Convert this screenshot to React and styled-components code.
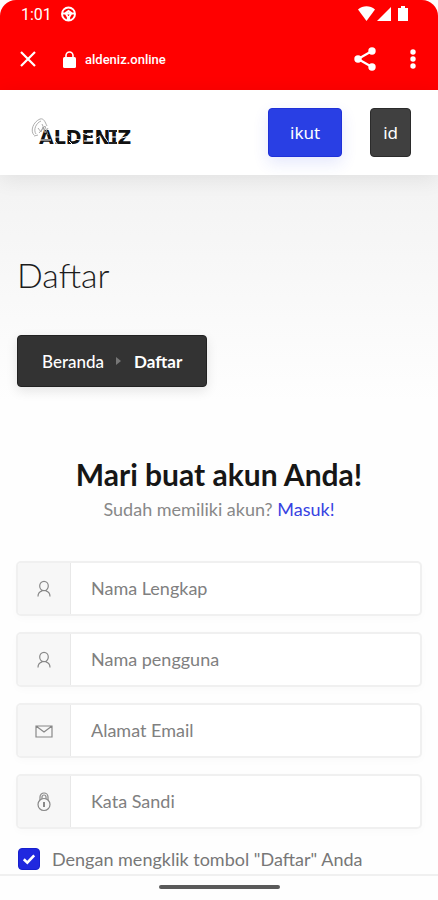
import React from "react";
import styled, { createGlobalStyle } from "styled-components";

const GlobalStyle = createGlobalStyle`
  *, *::before, *::after { box-sizing: border-box; }
  body { margin: 0; background: #fff; }
  button, input { font: inherit; }
`;

const Screen = styled.div`
  display: flex;
  flex-direction: column;
  min-height: 100vh;
  background: #fefefe;
  color: #1c1c1c;
  font-family: Lato, "Noto Sans", sans-serif;
  font-size: 18px;
`;

const BrowserChrome = styled.div`
  background: #ff0000;
  color: #fff;
  border-radius: 16px 16px 0 0;
  font-family: Roboto, sans-serif;
`;

const StatusBar = styled.div`
  display: flex;
  align-items: center;
  height: 28px;
  padding: 0 28px 0 21px;
  gap: 8px;
  font-size: 16px;
`;

const StatusIcons = styled.div`
  display: flex;
  align-items: center;
  margin-left: auto;
`;

const AddressBar = styled.div`
  display: flex;
  align-items: center;
  height: 62px;
  padding: 0 1px 0 16px;
`;

const IconButton = styled.button`
  display: flex;
  align-items: center;
  justify-content: center;
  width: ${(p) => p.$width}px;
  height: 40px;
  padding: 0;
  border: 0;
  background: none;
  color: inherit;
`;

const Address = styled.div`
  display: flex;
  align-items: center;
  flex: 1;
  gap: 9px;
  padding-left: 24px;
  font-size: 13px;
  font-weight: 500;
`;

const Header = styled.header`
  display: flex;
  align-items: center;
  height: 85px;
  padding: 0 27px 0 30px;
  gap: 28px;
  background: #fff;
  box-shadow: 0 4px 20px rgba(0, 0, 0, 0.08);
  z-index: 1;
`;

const Logo = styled.a`
  display: flex;
  margin-right: auto;
  color: #111;
  text-decoration: none;
`;

const HeaderButton = styled.button`
  height: 49px;
  padding: 0 ${(p) => (p.$primary ? 21 : 12)}px;
  border: ${(p) => (p.$primary ? "1px solid #1f31d8" : "1px solid #2b2b2b")};
  border-radius: 4px;
  background: ${(p) => (p.$primary ? "#293fe4" : "#404040")};
  color: #fff;
  font-family: "Noto Sans", sans-serif;
  font-size: 17px;
  line-height: 24px;
  box-shadow: ${(p) => (p.$primary ? "0 6px 16px rgba(41, 63, 228, 0.12)" : "none")};
`;

const Hero = styled.section`
  display: flex;
  flex-direction: column;
  align-items: flex-start;
  gap: 38px;
  padding: 78px 17px 40px;
  background: linear-gradient(#f3f3f3, #fefefe 90%);
`;

const PageTitle = styled.h1`
  margin: 0;
  font-size: 34px;
  font-weight: 300;
  line-height: 44px;
`;

const Breadcrumb = styled.nav`
  display: flex;
  align-items: center;
  height: 52px;
  padding: 0 24px;
  gap: 12px;
  border: 1px solid #222;
  border-radius: 4px;
  background: #333;
  color: #fff;
  font-size: 17px;
  box-shadow: 0 4px 12px rgba(0, 0, 0, 0.1);
`;

const Crumb = styled.a`
  color: inherit;
  text-decoration: none;
  font-weight: 500;
`;

const CurrentCrumb = styled.span`
  font-weight: 700;
`;

const Signup = styled.main`
  display: flex;
  flex-direction: column;
  flex: 1;
  padding: 27px 16px 0;
`;

const SignupTitle = styled.h2`
  margin: 0;
  text-align: center;
  font-size: 30px;
  font-weight: 700;
  line-height: 40px;
  color: #161616;
`;

const SignupHint = styled.p`
  margin: 0 0 37px;
  text-align: center;
  line-height: 30px;
  color: #888;
`;

const LoginLink = styled.a`
  color: #3742e2;
  text-decoration: none;
`;

const Form = styled.form`
  display: flex;
  flex-direction: column;
  gap: 16px;
`;

const Field = styled.label`
  display: flex;
  height: 55px;
  border: 2px solid #f0f0f0;
  border-radius: 5px;
  background: #fff;
  box-shadow: 0 3px 8px rgba(0, 0, 0, 0.02);
  overflow: hidden;
`;

const FieldIcon = styled.span`
  display: flex;
  align-items: center;
  justify-content: center;
  flex: none;
  width: 53px;
  border-right: 1px solid #e8e8e8;
  background: #f7f7f7;
  color: #888;
`;

const FieldInput = styled.input`
  flex: 1;
  min-width: 0;
  padding: 0 20px 2px;
  border: 0;
  outline: 0;
  background: transparent;
  color: #333;
  &::placeholder { color: #808080; opacity: 1; }
`;

const Agreement = styled.label`
  display: flex;
  align-items: center;
  gap: 12px;
  height: 28px;
  padding-left: 2px;
  color: #777;
`;

const Checkbox = styled.input`
  appearance: none;
  flex: none;
  width: 22px;
  height: 22px;
  margin: 0;
  border: 1px solid #1720ce;
  border-radius: 4px;
  background: #fff;
  &:checked {
    background: #2028df url("data:image/svg+xml,%3Csvg xmlns='http://www.w3.org/2000/svg' viewBox='0 0 20 20'%3E%3Cpath d='M4.8 10.3 8.3 13.7 15.2 6.3' fill='none' stroke='white' stroke-width='2.6'/%3E%3C/svg%3E") center / contain;
  }
`;

const GestureBar = styled.footer`
  display: flex;
  justify-content: center;
  height: 26px;
  padding-top: 9px;
  border-top: 2px solid #f0f0f0;
`;

const GestureHandle = styled.div`
  width: 121px;
  height: 4px;
  border-radius: 2px;
  background: #5a5a5a;
`;

const LogoArt = () => (
  <svg width="102" height="32" viewBox="0 0 102 32" role="img" aria-label="Aldeniz">
    <text x="9" y="27" fill="#111" fontFamily="DejaVu Sans, sans-serif" fontWeight="700" fontSize="19">
      ALDENIZ
    </text>
    <g fill="none" stroke="#fff" strokeWidth="1">
      <path d="M10 23h11M23 20h7M36 17l4 2M44 22l7 1M52 16l9 3M54 24h8M65 22l5-3M72 16l6 9M80 20h7M88 22l11-3M25 24l3 4M39 24l4 4" />
    </g>
    <path d="M79 14h8M79 26h8" stroke="#222" strokeWidth="2" />
    <g fill="none" stroke="#999" strokeWidth="0.8">
      <path d="M4 18c-4-4-1-13 6-16 4-1 5 3 7 7M6 17C3 13 6 6 11 4M4 19l4-1M8 11l3 4 2-5 2 6 3-5M9 16l6-7 3 9M12 7l4 9" />
    </g>
  </svg>
);

const WheelIcon = () => (
  <svg width="17" height="16" viewBox="0 0 16 16" fill="none" stroke="currentColor" strokeWidth="1.9" aria-hidden="true">
    <circle cx="8" cy="8" r="6.5" />
    <path d="M2 7.500h12M5.500 8l1.800 3v3M10.500 8l-1.800 3v3M5 7l3-2 3 2" />
  </svg>
);

const SignalIcons = () => (
  <svg width="52" height="16" viewBox="0 0 52 16" fill="currentColor" aria-hidden="true">
    <path d="M0 3.5C5-.8 12-.8 17 3.500L8.500 15Z" />
    <path d="M19 15 33 1v14Z" />
    <path d="M40 2h3V0h4v2h3v13H40Z" />
  </svg>
);

const CloseIcon = () => (
  <svg width="18" height="18" viewBox="0 0 18 18" fill="none" stroke="currentColor" strokeWidth="2.2" aria-hidden="true">
    <path d="M2 2l14 14M16 2L2 16" />
  </svg>
);

const LockIcon = () => (
  <svg width="13" height="17" viewBox="0 0 13 17" aria-hidden="true">
    <rect y="6" width="13" height="11" rx="1.500" fill="currentColor" />
    <path d="M3 7V4.500a3.500 3.500 0 0 1 7 0V7" fill="none" stroke="currentColor" strokeWidth="1.6" />
  </svg>
);

const ShareIcon = () => (
  <svg width="22" height="24" viewBox="0 0 22 24" fill="currentColor" aria-hidden="true">
    <path d="M18 4 4 12l14 8" fill="none" stroke="currentColor" strokeWidth="2.2" />
    <circle cx="18" cy="4" r="3.700" />
    <circle cx="4" cy="12" r="3.700" />
    <circle cx="18" cy="20" r="3.700" />
  </svg>
);

const MoreIcon = () => (
  <svg width="6" height="20" viewBox="0 0 6 20" fill="currentColor" aria-hidden="true">
    <circle cx="3" cy="3" r="2.700" />
    <circle cx="3" cy="10" r="2.700" />
    <circle cx="3" cy="17" r="2.700" />
  </svg>
);

const ChevronIcon = () => (
  <svg width="6" height="8" viewBox="0 0 6 8" fill="#777" aria-hidden="true">
    <path d="M0 0 5 4 0 8Z" />
  </svg>
);

const UserIcon = () => (
  <svg width="16" height="18" viewBox="0 0 16 18" fill="none" stroke="currentColor" strokeWidth="1.2" aria-hidden="true">
    <ellipse cx="8" cy="6" rx="4.300" ry="4.700" />
    <path d="M2 16.500c0-3 1.300-4.800 4-5.600v-1M14 16.500c0-3-1.300-4.800-4-5.600v-1" />
  </svg>
);

const MailIcon = () => (
  <svg width="18" height="14" viewBox="0 0 18 14" fill="none" stroke="currentColor" strokeWidth="1.2" aria-hidden="true">
    <path d="M1 2h16v11H1ZM1 2l8 6 8-6" />
  </svg>
);

const PadlockIcon = () => (
  <svg width="16" height="20" viewBox="0 0 16 20" fill="none" stroke="currentColor" strokeWidth="1.2" aria-hidden="true">
    <circle cx="8" cy="12.500" r="6" />
    <path d="M4 8V5a4 4 0 0 1 8 0v3M6 7V5a2 2 0 0 1 4 0v2" />
    <path d="M8 10v5" strokeWidth="2" />
  </svg>
);

const fields = [
  { name: "fullname", label: "Nama Lengkap", type: "text", Icon: UserIcon },
  { name: "username", label: "Nama pengguna", type: "text", Icon: UserIcon },
  { name: "email", label: "Alamat Email", type: "email", Icon: MailIcon },
  { name: "password", label: "Kata Sandi", type: "password", Icon: PadlockIcon },
];

export default function App() {
  return (
    <Screen>
      <GlobalStyle />
      <BrowserChrome>
        <StatusBar>
          <span>1:01</span>
          <WheelIcon />
          <StatusIcons>
            <SignalIcons />
          </StatusIcons>
        </StatusBar>
        <AddressBar>
          <IconButton $width={23} aria-label="Tutup"><CloseIcon /></IconButton>
          <Address>
            <LockIcon />
            <span>aldeniz.online</span>
          </Address>
          <IconButton $width={48} aria-label="Bagikan"><ShareIcon /></IconButton>
          <IconButton $width={48} aria-label="Menu"><MoreIcon /></IconButton>
        </AddressBar>
      </BrowserChrome>
      <Header>
        <Logo href="#"><LogoArt /></Logo>
        <HeaderButton $primary>ikut</HeaderButton>
        <HeaderButton>id</HeaderButton>
      </Header>
      <Hero>
        <PageTitle>Daftar</PageTitle>
        <Breadcrumb>
          <Crumb href="#">Beranda</Crumb>
          <ChevronIcon />
          <CurrentCrumb>Daftar</CurrentCrumb>
        </Breadcrumb>
      </Hero>
      <Signup>
        <SignupTitle>Mari buat akun Anda!</SignupTitle>
        <SignupHint>
          Sudah memiliki akun? <LoginLink href="#">Masuk!</LoginLink>
        </SignupHint>
        <Form>
          {fields.map(({ name, label, type, Icon }) => (
            <Field key={name}>
              <FieldIcon><Icon /></FieldIcon>
              <FieldInput name={name} type={type} placeholder={label} aria-label={label} />
            </Field>
          ))}
          <Agreement>
            <Checkbox type="checkbox" defaultChecked />
            <span>Dengan mengklik tombol "Daftar" Anda</span>
          </Agreement>
        </Form>
      </Signup>
      <GestureBar>
        <GestureHandle />
      </GestureBar>
    </Screen>
  );
}
